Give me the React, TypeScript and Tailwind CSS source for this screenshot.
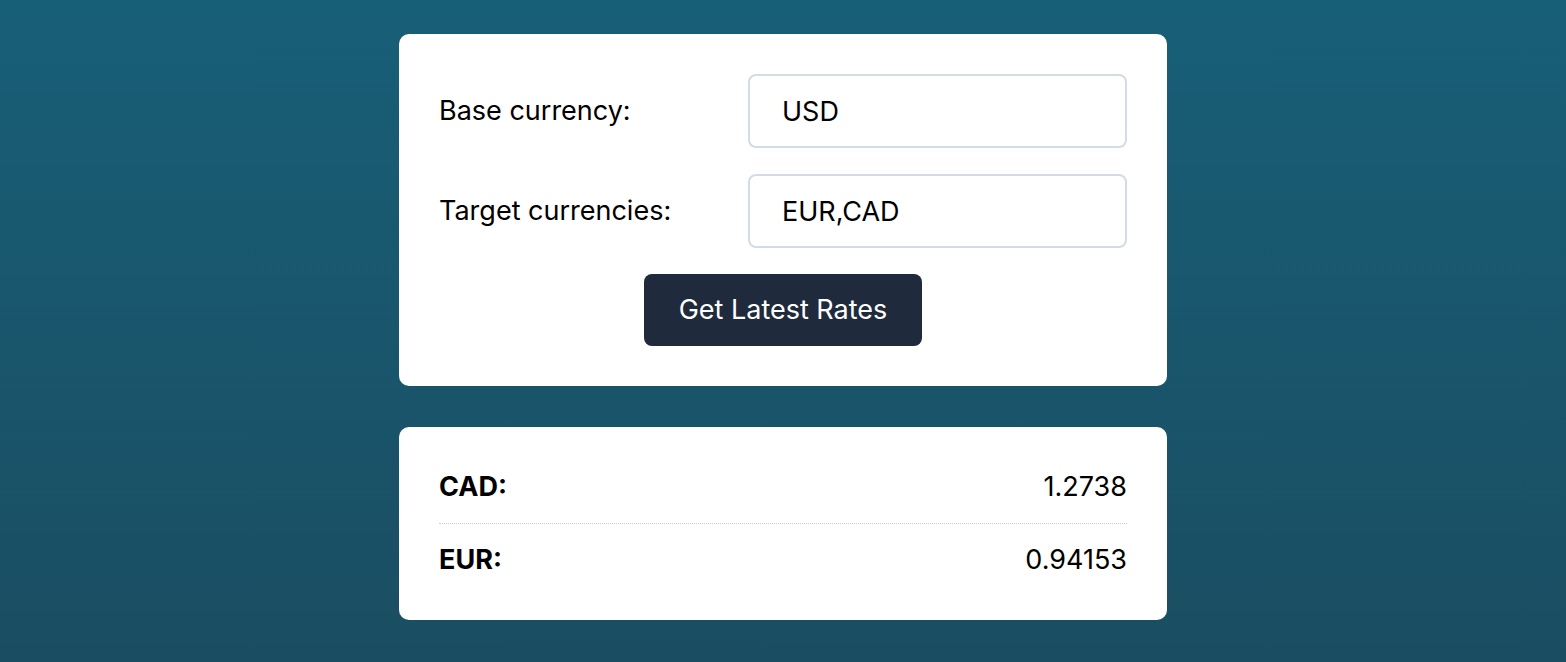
export default function App() {
  const rates = [
    { code: 'CAD', value: '1.2738' },
    { code: 'EUR', value: '0.94153' },
  ];

  return (
    <main className="min-h-screen bg-gradient-to-b from-[#175f77] to-[#1a4d62] pt-[34px] pb-10 font-['Inter',sans-serif] text-black">
      <div className="mx-auto w-[768px]">
        <form className="rounded-[10px] bg-white p-10">
          <div className="flex items-center justify-between">
            <label className="text-[27px]">Base currency:</label>
            <input
              className="h-[74px] w-[379px] rounded-lg border-2 border-[#d3dbe5] px-8 text-[27px] outline-none"
              defaultValue="USD"
            />
          </div>
          <div className="mt-[26px] flex items-center justify-between">
            <label className="text-[27px]">Target currencies:</label>
            <input
              className="h-[74px] w-[379px] rounded-lg border-2 border-[#d3dbe5] px-8 text-[27px] outline-none"
              defaultValue="EUR,CAD"
            />
          </div>
          <div className="mt-[26px] flex justify-center">
            <button
              type="button"
              className="h-[72px] w-[278px] rounded-lg bg-[#1f2a3c] text-[27px] text-white"
            >
              Get Latest Rates
            </button>
          </div>
        </form>

        <section className="mt-[41px] rounded-[10px] bg-white px-10 py-10">
          {rates.map((rate, i) => (
            <div
              key={rate.code}
              className={`flex items-center justify-between text-[27px] leading-10 ${
                i === 0 ? 'border-b border-dotted border-[#c9ced6] pb-4' : 'pt-4'
              }`}
            >
              <span className="font-bold">{rate.code}:</span>
              <span>{rate.value}</span>
            </div>
          ))}
        </section>
      </div>
    </main>
  );
}
